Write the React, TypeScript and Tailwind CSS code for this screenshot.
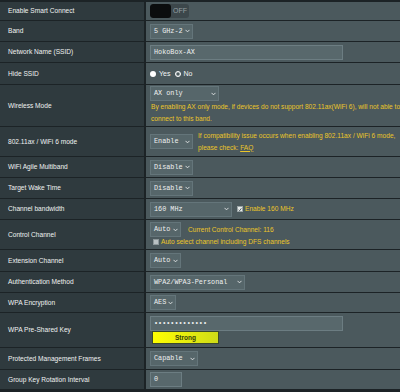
import React from "react";

const SANS = "font-['Liberation_Sans',Arial,sans-serif]";
const MONO = "font-['Liberation_Mono','Courier_New',monospace]";

function Chevron() {
  return (
    <svg width="5" height="4" viewBox="0 0 10 7" className="shrink-0">
      <path d="M1 1.2l4 4 4-4" stroke="#e6e9ea" strokeWidth="1.8" fill="none" />
    </svg>
  );
}

function Select({ w, children }: { w: string; children: React.ReactNode }) {
  return (
    <div
      className={`${w} h-[15px] shrink-0 flex items-center justify-between bg-[#56666a] border border-[#64757a] pl-[3px] pr-[2px] ${MONO} text-[6.8px] text-[#eef0f0] whitespace-nowrap`}
    >
      <span>{children}</span>
      <Chevron />
    </div>
  );
}

function Input({ w, children }: { w: string; children: React.ReactNode }) {
  return (
    <div
      className={`${w} h-[15px] flex items-center bg-[#58686c] border border-[#6c7d82] pl-[3px] ${MONO} text-[6.8px] text-[#eef0f0] whitespace-nowrap`}
    >
      {children}
    </div>
  );
}

function Row({
  label,
  h,
  children,
}: {
  label: string;
  h: string;
  children: React.ReactNode;
}) {
  return (
    <div className={`flex ${h} border-b border-[#1c2326]`}>
      <div
        className={`w-[146px] shrink-0 bg-[#2f3a3e] border-r-2 border-[#1c2326] flex items-center pl-[8px] ${SANS} text-[6.6px] text-[#f0f2f2] whitespace-nowrap`}
      >
        {label}
      </div>
      <div className="flex-1 min-w-0 bg-[#4b595d] flex flex-col justify-center pl-[4px]">
        {children}
      </div>
    </div>
  );
}

const Y = `${SANS} text-[6.6px] text-[#ebc629] whitespace-nowrap`;

function CheckBox({ checked }: { checked: boolean }) {
  return checked ? (
    <span className="w-[6px] h-[6px] shrink-0 bg-[#e8ecec] border border-[#9aa4a6] flex items-center justify-center">
      <svg width="5" height="5" viewBox="0 0 10 10">
        <path d="M1.5 5.5l2.5 2.5 4.5-6" stroke="#334045" strokeWidth="2" fill="none" />
      </svg>
    </span>
  ) : (
    <span className="w-[6px] h-[6px] shrink-0 bg-[#b9c1c3] border border-[#8d979a]" />
  );
}

export default function App() {
  return (
    <div className="w-[400px] h-[392px] bg-[#1c2326] border-t-2 border-b-2 border-[#1c2326] overflow-hidden">
      <Row label="Enable Smart Connect" h="h-[19px]">
        <div className="flex h-[14px] w-[39px] rounded-[3px] overflow-hidden bg-[#3c474b]">
          <div className="w-[21px] h-full bg-[#0b0d0e] rounded-[3px]" />
          <span className={`flex-1 flex items-center justify-center ${SANS} text-[7px] text-[#959fa2]`}>
            OFF
          </span>
        </div>
      </Row>
      <Row label="Band" h="h-[21px]">
        <Select w="w-[43px]">5 GHz-2</Select>
      </Row>
      <Row label="Network Name (SSID)" h="h-[21px]">
        <Input w="w-[193px]">HokoBox-AX</Input>
      </Row>
      <Row label="Hide SSID" h="h-[22px]">
        <div className={`flex items-center ${SANS} text-[7px] text-[#f2f4f4]`}>
          <span className="w-[6px] h-[6px] rounded-full bg-white" />
          <span className="ml-[3px] mt-[2px]">Yes</span>
          <span className="ml-[5px] w-[6px] h-[6px] rounded-full border border-white bg-[#7d8a8d] flex items-center justify-center">
            <span className="w-[2px] h-[2px] rounded-full bg-[#3f4b4f]" />
          </span>
          <span className="ml-[2px] mt-[2px]">No</span>
        </div>
      </Row>
      <Row label="Wireless Mode" h="h-[42px]">
        <Select w="w-[69px]">AX only</Select>
        <div className={`${Y} leading-[12px] mt-[0px] pl-[1px]`}>
          By enabling AX only mode, if devices do not support 802.11ax(WiFi 6), will not able to
          <br />
          connect to this band.
        </div>
      </Row>
      <Row label="802.11ax / WiFi 6 mode" h="h-[30px]">
        <div className="flex items-center">
          <Select w="w-[43px]">Enable</Select>
          <div className={`${Y} leading-[12px] ml-[5px]`}>
            If compatibility issue occurs when enabling 802.11ax / WiFi 6 mode,
            <br />
            please check: <span className="underline">FAQ</span>
          </div>
        </div>
      </Row>
      <Row label="WiFi Agile Multiband" h="h-[21px]">
        <Select w="w-[43px]">Disable</Select>
      </Row>
      <Row label="Target Wake Time" h="h-[21px]">
        <Select w="w-[43px]">Disable</Select>
      </Row>
      <Row label="Channel bandwidth" h="h-[21px]">
        <div className="flex items-center">
          <Select w="w-[82px]">160 MHz</Select>
          <span className="ml-[5px]">
            <CheckBox checked />
          </span>
          <span className={`${Y} ml-[2px]`}>Enable 160 MHz</span>
        </div>
      </Row>
      <Row label="Control Channel" h="h-[30px]">
        <div className="flex items-center">
          <Select w="w-[31px]">Auto</Select>
          <span className={`${Y} ml-[7px]`}>Current Control Channel: 116</span>
        </div>
        <div className="flex items-center h-[10px] pl-[3px]">
          <CheckBox checked={false} />
          <span className={`${Y} ml-[2px]`}>Auto select channel including DFS channels</span>
        </div>
      </Row>
      <Row label="Extension Channel" h="h-[22px]">
        <Select w="w-[31px]">Auto</Select>
      </Row>
      <Row label="Authentication Method" h="h-[21px]">
        <Select w="w-[95px]">WPA2/WPA3-Personal</Select>
      </Row>
      <Row label="WPA Encryption" h="h-[20px]">
        <Select w="w-[26px]">AES</Select>
      </Row>
      <Row label="WPA Pre-Shared Key" h="h-[35px]">
        <Input w="w-[193px]">•••••••••••••</Input>
        <div
          className={`ml-[2px] w-[67px] h-[13px] border border-[#3b4a2c] bg-linear-to-r from-[#ffff00] to-[#cfdc16] flex items-center justify-center ${SANS} text-[6.5px] font-bold text-[#33400c]`}
        >
          Strong
        </div>
      </Row>
      <Row label="Protected Management Frames" h="h-[22px]">
        <Select w="w-[48px]">Capable</Select>
      </Row>
      <Row label="Group Key Rotation Interval" h="h-[20px]">
        <Input w="w-[32px]">0</Input>
      </Row>
    </div>
  );
}
